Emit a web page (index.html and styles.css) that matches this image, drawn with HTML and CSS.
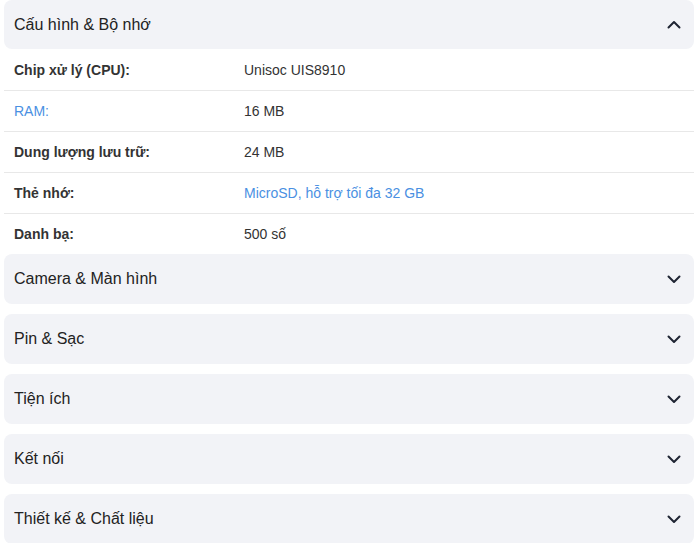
FILE: index.html
```html
<!DOCTYPE html>
<html lang="vi">
<head>
<meta charset="utf-8">
<link rel="stylesheet" href="styles.css">
</head>
<body>
<div class="specs">
  <section class="group open">
    <div class="head"><span>Cấu hình &amp; Bộ nhớ</span>
      <svg class="chev" viewBox="0 0 16 16" width="16" height="16"><path d="M2.5 10.5 8 5l5.5 5.5" fill="none" stroke="#1f2433" stroke-width="2" stroke-linecap="round" stroke-linejoin="round"/></svg>
    </div>
    <ul class="rows">
      <li><span class="lbl">Chip xử lý (CPU):</span><span class="val">Unisoc UIS8910</span></li>
      <li><span class="lbl link">RAM:</span><span class="val">16 MB</span></li>
      <li><span class="lbl">Dung lượng lưu trữ:</span><span class="val">24 MB</span></li>
      <li><span class="lbl">Thẻ nhớ:</span><span class="val link">MicroSD, hỗ trợ tối đa 32 GB</span></li>
      <li><span class="lbl">Danh bạ:</span><span class="val">500 số</span></li>
    </ul>
  </section>
  <section class="group"><div class="head"><span>Camera &amp; Màn hình</span><svg class="chev" viewBox="0 0 16 16" width="16" height="16"><path d="M2.5 5.5 8 11l5.5-5.5" fill="none" stroke="#1f2433" stroke-width="2" stroke-linecap="round" stroke-linejoin="round"/></svg></div></section>
  <section class="group"><div class="head"><span>Pin &amp; Sạc</span><svg class="chev" viewBox="0 0 16 16" width="16" height="16"><path d="M2.5 5.5 8 11l5.5-5.5" fill="none" stroke="#1f2433" stroke-width="2" stroke-linecap="round" stroke-linejoin="round"/></svg></div></section>
  <section class="group"><div class="head"><span>Tiện ích</span><svg class="chev" viewBox="0 0 16 16" width="16" height="16"><path d="M2.5 5.5 8 11l5.5-5.5" fill="none" stroke="#1f2433" stroke-width="2" stroke-linecap="round" stroke-linejoin="round"/></svg></div></section>
  <section class="group"><div class="head"><span>Kết nối</span><svg class="chev" viewBox="0 0 16 16" width="16" height="16"><path d="M2.5 5.5 8 11l5.5-5.5" fill="none" stroke="#1f2433" stroke-width="2" stroke-linecap="round" stroke-linejoin="round"/></svg></div></section>
  <section class="group"><div class="head"><span>Thiết kế &amp; Chất liệu</span><svg class="chev" viewBox="0 0 16 16" width="16" height="16"><path d="M2.5 5.5 8 11l5.5-5.5" fill="none" stroke="#1f2433" stroke-width="2" stroke-linecap="round" stroke-linejoin="round"/></svg></div></section>
</div>
</body>
</html>
```
FILE: styles.css
```css
* { box-sizing: border-box; }
body {
  margin: 0;
  background: #fff;
  font-family: "Liberation Sans", Arial, sans-serif;
  color: #333;
}
.specs {
  padding: 0 1px 0 4px;
  display: flex;
  flex-direction: column;
  gap: 10px;
}
.group.open { margin-bottom: -10px; }
.head {
  height: 50px;
  background: #f2f3f7;
  border-radius: 8px;
  display: flex;
  align-items: center;
  justify-content: space-between;
  padding: 0 12px 0 10px;
  font-size: 16px;
  color: #222;
}
.group.open .head { height: 49px; }
.chev { display: block; }
.rows {
  list-style: none;
  margin: 0;
  padding: 0;
}
.rows li {
  display: flex;
  align-items: center;
  height: 41px;
  padding: 0 10px;
  border-bottom: 1px solid #e8e8e8;
}
.rows li:first-child { padding-top: 1px; height: 42px; }
.rows li:last-child { border-bottom: none; height: 40px; }
.lbl {
  width: 230px;
  flex: none;
  font-size: 14px;
  font-weight: bold;
  color: #333;
}
.lbl.link {
  font-weight: normal;
  color: #4a90e2;
}
.val {
  font-size: 14px;
  color: #333;
}
.val.link { color: #4a90e2; }
```
